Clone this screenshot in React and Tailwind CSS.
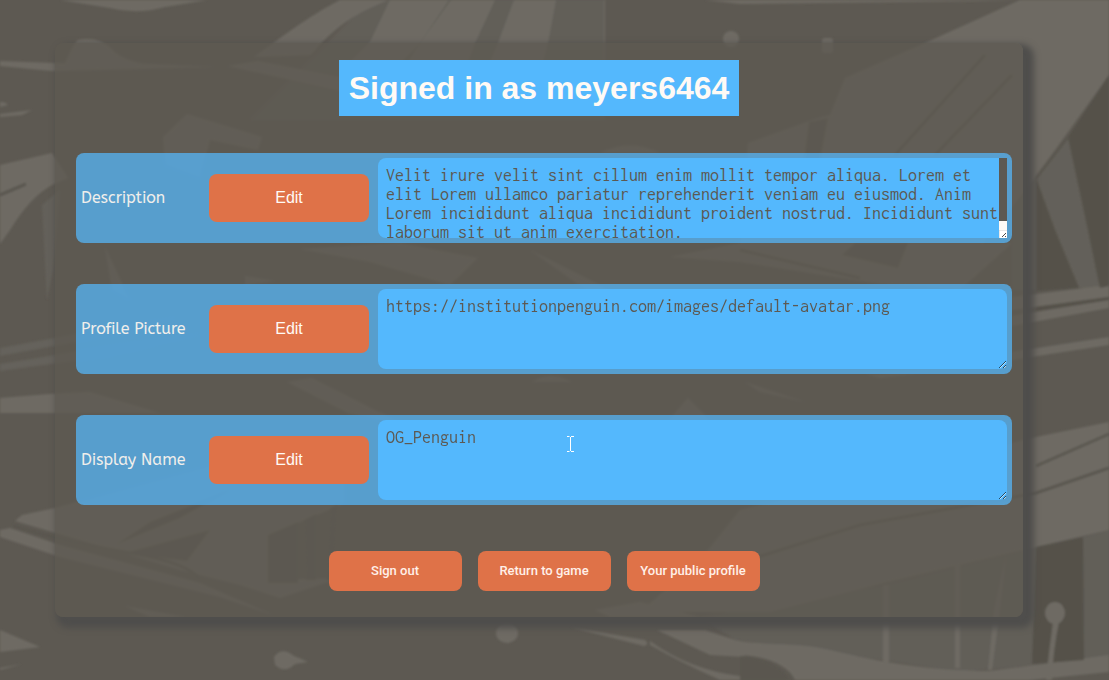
import React from "react";

const FIELDS = [
  {
    id: "description",
    label: "Description",
    value:
      "Velit irure velit sint cillum enim mollit tempor aliqua. Lorem et elit Lorem ullamco pariatur reprehenderit veniam eu eiusmod. Anim Lorem incididunt aliqua incididunt proident nostrud. Incididunt sunt laborum sit ut anim exercitation.",
    scrolls: true,
  },
  {
    id: "picture",
    label: "Profile Picture",
    value: "https://institutionpenguin.com/images/default-avatar.png",
  },
  { id: "name", label: "Display Name", value: "OG_Penguin", pointer: true },
];

const ACTIONS = ["Sign out", "Return to game", "Your public profile"];

function Backdrop() {
  return (
    <svg
      className="absolute inset-0 h-full w-full"
      viewBox="0 0 1109 680"
      preserveAspectRatio="xMidYMid slice"
      aria-hidden="true"
    >
      <defs>
        <filter id="soft" x="0" y="0" width="100%" height="100%">
          <feGaussianBlur stdDeviation="0.9" />
        </filter>
      </defs>
      <rect width="1109" height="680" fill="#5d5952" />
      <g filter="url(#soft)">
        <g fill="#625f58">
          <path d="M370 0H605V120H250L330 40Z" />
          <path d="M1036 178L1012 205V290H1036Z" />
          <path d="M883 585L1036 547V665L960 672L883 660L735 640L700 617Z" />
          <path d="M1083 537L1109 530V655L1084 660Z" />
        </g>
        <g fill="#6e6b64">
          <path d="M60 0L110 8Q137 15 165 7L207 0Z" />
          <path d="M340 0C310 15 275 42 254 57L311 55Q335 25 368 9L388 0Z" />
          <path d="M390 0L370 42L350 62L402 62L420 43L449 0Z" />
          <path d="M451 0L420 43L408 62L468 62L475 43L495 0Z" />
          <path d="M514 0L498 43L490 62L543 62L548 43L556 0Z" />
          <path d="M228 66L258 61L345 78V92Z" />
          <path d="M604 0h1v60h-1Z" />
          <path d="M705 0H1020L980 1L740 4Z" />
          <path d="M1020 0H1109V75L1035 178L970 260L900 243H740L748 143L815 119L830 115L845 78L925 43Z" />
          <path d="M1068 137L1036 178L1055 230L1079 288L1100 288L1088 230Z" fill="#64615a" />
          <path d="M1012 297L1109 285V297L1012 310Z" />
          <path d="M1012 316L1109 300V308L1012 326Z" />
          <path d="M1012 352L1109 337V345L1012 360Z" />
          <path d="M740 510L1036 437L1109 422V530L1036 547L880 584L770 612L640 612L700 560Z" />
          <path d="M0 61L52 63L150 64L215 67L52 71L0 66Z" />
          <path d="M62 70Q74 42 78 40Q98 36 112 49Q120 60 150 65Z" />
          <path d="M0 102Q6 102 8 105L0 107Z" />
          <path d="M0 114L32 110L22 115L0 117Z" />
          <path d="M0 165L52 153L68 178L52 185Q30 197 10 230L0 244Z" />
          <path d="M42 205L60 190L53 270L47 300Z" fill="#64615a" />
          <path d="M163 137L187 114L262 137L258 150L210 140L200 178L165 165Z" />
          <path d="M105 247L130 300L112 290Z" />
          <path d="M245 285V276L275 281Z" />
          <path d="M0 348L130 324L175 318L130 332L0 356Z" fill="#65625b" />
          <path d="M0 364L110 346L200 334L110 356L0 371Z" fill="#65625b" />
          <path d="M0 398L50 394L90 392L160 413H0Z" />
          <path d="M287 382L312 378L375 410L420 430L348 413Z" />
          <path d="M300 249L400 243L478 258L450 285L370 262Z" />
          <path d="M530 250L620 295L600 300Z" />
          <path d="M660 430L688 398L720 430Z" />
          <path d="M670 257L740 243H1012L960 290L880 284L740 262Z" />
          <path d="M600 153Q630 138 660 153Z" />
          <path d="M532 382Q550 370 572 382Z" />
          <path d="M866 374L930 372L880 378Z" />
          <path d="M745 382L805 402L760 392Z" />
          <path d="M15 521L22 515L55 508L220 463L345 440V503L270 535V580L340 578L280 598L240 585L180 570L110 549Z" />
          <path d="M0 530L10 528L60 545L200 583L273 615L220 597L60 557L0 537Z" />
          <path d="M125 606L185 617L150 617Z" />
          <path d="M0 630L40 647L0 652Z" />
          <path d="M0 668L22 664L0 670Z" />
          <path d="M274 657Q282 646 294 656Q302 659 308 662L295 664Q285 674 275 665Z" />
          <ellipse cx="507" cy="633" rx="11" ry="10" />
          <circle cx="731" cy="39" r="8" />
          <rect x="822" y="38" width="11" height="15" rx="3" />
          <path d="M570 627L645 640Q650 644 644 646Z" />
          <path d="M650 641Q690 670 740 676V680H720Q680 662 650 645Z" />
          <path d="M657 630L710 655L745 657L735 640L705 630Z" />
          <path d="M595 610L640 602L700 617H610Z" />
          <path d="M883 585H889V662H883Z" />
          <path d="M955 565H960V668H955Z" />
          <path d="M1006 555L994 610L988 670H992L1000 610Z" />
          <path d="M735 640C760 646 800 642 830 650C880 662 930 671 990 671L1109 655V672L1030 680H795C790 668 770 656 740 655Z" />
        </g>
        <g fill="#55514a">
          <path d="M1109 75L1068 137L1088 230L1100 288L1109 286Z" />
          <path d="M1036 178V291L1079 288L1055 230Z" />
          <path d="M1036 547L1083 537L1084 660L1032 664Z" />
          <path d="M1036 307L1109 297V300L1036 311Z" />
        </g>
        <g fill="#5a564f">
          <path d="M842 255L855 243H908L898 268Z" />
          <path d="M268 535L298 522V583H268Z" />
          <path d="M304 520L316 514V580H306Z" />
          <path d="M330 508L338 504L334 580H326Z" />
          <path d="M117 544L150 522L230 490L180 518Z" />
          <path d="M125 553L210 530L187 561Z" />
          <path d="M740 656C765 657 783 668 790 680H740Z" />
          <path d="M809 122L828 118L820 160H804Z" />
        </g>
        <g fill="none" stroke="#5a564f" strokeWidth="3">
          <path d="M985 55L895 155" />
          <path d="M1012 75L935 155" />
          <path d="M1036 466L1109 434" />
          <path d="M700 575L860 525L1036 493L1109 468" />
          <path d="M13 526Q70 543 130 553T200 580" />
          <path d="M740 250L860 278" />
          <path d="M0 195L26 184" />
          <path d="M1036 178L1068 137" />
        </g>
        <g fill="#6e6b64">
          <ellipse cx="1055" cy="613" rx="10" ry="11" />
          <path d="M1053 622H1059Q1053 650 1052 680H1046Q1049 650 1053 622Z" />
        </g>
      </g>
    </svg>
  );
}

function TextPointer() {
  return (
    <svg
      className="pointer-events-none absolute left-[188px] top-4 h-4 w-2"
      viewBox="0 0 8 16"
      aria-hidden="true"
    >
      <path
        d="M1 .5H3.500M5 .5H8M4.500 1V15M1 15.500H3.500M5 15.500H8"
        stroke="#fff"
        fill="none"
      />
    </svg>
  );
}

function ScrollBar() {
  return (
    <div
      className="pointer-events-none absolute inset-y-0 right-0 flex w-2 flex-col bg-[#fffaf5]"
      aria-hidden="true"
    >
      <div className="h-[63px] bg-[#5d5952]" />
      <svg className="mt-auto h-2 w-2" viewBox="0 0 8 8">
        <path d="M0 0H8V8H0Z" fill="#fff" />
        <path d="M0 8V0H8" stroke="#d4d4d4" fill="none" />
        <path d="M3 7L7 3M6 7L7 6" stroke="#4a4a4a" fill="none" />
      </svg>
    </div>
  );
}

function FieldRow({ field }) {
  return (
    <div className="flex items-center rounded-lg bg-[#54b8fd]/72 p-[5px]">
      <label
        htmlFor={field.id}
        className="w-32 shrink-0 font-['ABeeZee','Noto_Sans',sans-serif] text-base text-[#f0eeeb]"
      >
        {field.label}
      </label>
      <button
        type="button"
        className="mr-[9px] h-12 w-40 shrink-0 rounded-lg bg-[#df7248] text-base text-[#fffaf5]"
      >
        Edit
      </button>
      <div className="relative min-w-0 flex-1">
        <textarea
          id={field.id}
          defaultValue={field.value}
          spellCheck={false}
          className="block h-20 w-full resize overflow-auto rounded-lg bg-[#54b8fd] p-2 font-['Inconsolata','Liberation_Mono',monospace] text-lg leading-[19px] text-[#5d5952] outline-none"
        />
        {field.scrolls && <ScrollBar />}
        {field.pointer && <TextPointer />}
      </div>
    </div>
  );
}

export default function App() {
  return (
    <div className="relative min-h-screen bg-[#5d5952] pb-[63px] pl-[55px] pr-[86px] pt-[43px] font-['Liberation_Sans',Arial,sans-serif]">
      <Backdrop />
      <main className="relative rounded-lg bg-[#5d5952]/75 pb-[26px] pt-[17px] shadow-[6px_6px_6px_5px_#4f4e4c]">
        <h1 className="mx-auto w-fit bg-[#54b8fd] p-[10px] text-[32px] font-bold leading-9 text-[#fffaf5]">
          Signed in as meyers6464
        </h1>
        <form className="pl-[21px] pr-[11px] pt-[37px]" onSubmit={(e) => e.preventDefault()}>
          <div className="flex flex-col gap-[41px]">
            {FIELDS.map((field) => (
              <FieldRow key={field.id} field={field} />
            ))}
          </div>
          <div className="mt-[46px] flex justify-center gap-4">
            {ACTIONS.map((action) => (
              <button
                key={action}
                type="button"
                className="h-10 w-[133px] whitespace-nowrap rounded-lg bg-[#df7248] font-['Roboto',sans-serif] text-[13px] font-medium text-[#fff0e8]"
              >
                {action}
              </button>
            ))}
          </div>
        </form>
      </main>
    </div>
  );
}
